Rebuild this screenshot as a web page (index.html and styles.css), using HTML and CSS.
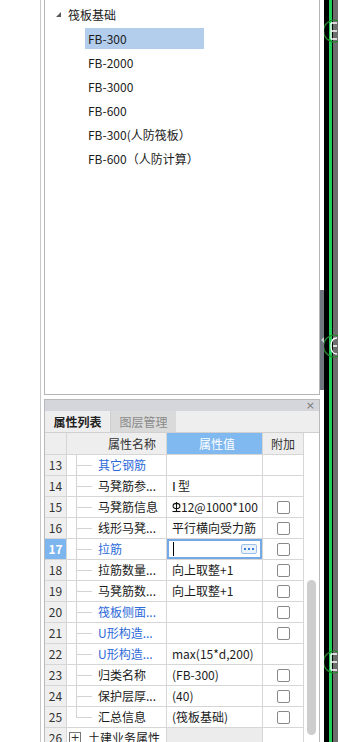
FILE: index.html
```html
<!DOCTYPE html>
<html>
<head>
<meta charset="utf-8">
<link rel="stylesheet" href="styles.css">
</head>
<body>
<div class="app">
  <div class="blank"></div>
  <div class="outer-line"></div>
  <div class="gap3"></div>
  <div class="main">
    <div class="tree">
      <div class="tree-row head"><span class="caret"></span><span class="label">筏板基础</span></div>
      <div class="tree-row item"><span class="label sel">FB-300</span></div>
      <div class="tree-row item"><span class="label">FB-2000</span></div>
      <div class="tree-row item"><span class="label">FB-3000</span></div>
      <div class="tree-row item"><span class="label">FB-600</span></div>
      <div class="tree-row item"><span class="label">FB-300(人防筏板）</span></div>
      <div class="tree-row item"><span class="label">FB-600（人防计算）</span></div>
    </div>
    <div class="props">
      <div class="titlebar"><span class="close">×</span></div>
      <div class="tabs">
        <div class="tab active">属性列表</div>
        <div class="tab">图层管理</div>
      </div>
      <div class="table-wrap">
        <div class="table">
          <div class="row header">
            <div class="c num"></div>
            <div class="c name">属性名称</div>
            <div class="c val">属性值</div>
            <div class="c add">附加</div>
          </div>
          <div class="row">
            <div class="c num">13</div>
            <div class="c name tl blue">其它钢筋</div>
            <div class="c val"></div>
            <div class="c add"></div>
          </div>
          <div class="row">
            <div class="c num">14</div>
            <div class="c name tl">马凳筋参...</div>
            <div class="c val"><span class="roman">Ⅰ</span>型</div>
            <div class="c add"></div>
          </div>
          <div class="row">
            <div class="c num">15</div>
            <div class="c name tl">马凳筋信息</div>
            <div class="c val"><svg class="rebar" width="9" height="12" viewBox="0 0 9 12"><ellipse cx="4.5" cy="5" rx="3.4" ry="2.6" fill="none" stroke="#111" stroke-width="1.1"/><line x1="4.5" y1="1" x2="4.5" y2="10.5" stroke="#111" stroke-width="1.1"/><line x1="0.5" y1="10.5" x2="8.5" y2="10.5" stroke="#111" stroke-width="1.1"/></svg>12@1000*100</div>
            <div class="c add"><span class="cb"></span></div>
          </div>
          <div class="row">
            <div class="c num">16</div>
            <div class="c name tl">线形马凳...</div>
            <div class="c val">平行横向受力筋</div>
            <div class="c add"><span class="cb"></span></div>
          </div>
          <div class="row">
            <div class="c num cur">17</div>
            <div class="c name tl blue">拉筋</div>
            <div class="c val edit"><span class="caretline"></span><span class="dots"><i></i><i></i><i></i></span></div>
            <div class="c add"><span class="cb"></span></div>
          </div>
          <div class="row">
            <div class="c num">18</div>
            <div class="c name tl">拉筋数量...</div>
            <div class="c val">向上取整+1</div>
            <div class="c add"><span class="cb"></span></div>
          </div>
          <div class="row">
            <div class="c num">19</div>
            <div class="c name tl">马凳筋数...</div>
            <div class="c val">向上取整+1</div>
            <div class="c add"><span class="cb"></span></div>
          </div>
          <div class="row">
            <div class="c num">20</div>
            <div class="c name tl blue">筏板侧面...</div>
            <div class="c val"></div>
            <div class="c add"><span class="cb"></span></div>
          </div>
          <div class="row">
            <div class="c num">21</div>
            <div class="c name tl blue">U形构造...</div>
            <div class="c val"></div>
            <div class="c add"><span class="cb"></span></div>
          </div>
          <div class="row">
            <div class="c num">22</div>
            <div class="c name tl blue">U形构造...</div>
            <div class="c val">max(15*d,200)</div>
            <div class="c add"></div>
          </div>
          <div class="row">
            <div class="c num">23</div>
            <div class="c name tl">归类名称</div>
            <div class="c val">(FB-300)</div>
            <div class="c add"><span class="cb"></span></div>
          </div>
          <div class="row">
            <div class="c num">24</div>
            <div class="c name tl">保护层厚...</div>
            <div class="c val">(40)</div>
            <div class="c add"><span class="cb"></span></div>
          </div>
          <div class="row">
            <div class="c num">25</div>
            <div class="c name tl last">汇总信息</div>
            <div class="c val">(筏板基础)</div>
            <div class="c add"><span class="cb"></span></div>
          </div>
          <div class="row">
            <div class="c num">26</div>
            <div class="c name group"><span class="plus">+</span>土建业务属性</div>
            <div class="c val grey"></div>
            <div class="c add"></div>
          </div>
        </div>
        <div class="vscroll"><div class="thumb"></div></div>
      </div>
    </div>
  </div>
  <div class="splitter"><div class="split-bar"><span class="split-arrow"></span></div></div>
  <div class="canvas">
    <div class="s black5"></div>
    <div class="s green"></div>
    <div class="s black1"></div>
    <div class="s grey5"></div>
    <svg class="markers" width="30" height="742" viewBox="0 0 30 742">
      <g fill="none" stroke="#23862a" stroke-width="1.2">
        <circle cx="11.5" cy="31" r="11"/>
        <circle cx="11.5" cy="346" r="11"/>
        <circle cx="11.5" cy="662" r="11"/>
      </g>
      <g fill="none" stroke="#ffffff" stroke-width="1.3">
        <path d="M8 23 V39 M8 23 H14 M8 31 H14 M8 39 H14"/>
        <path d="M14 338 Q8 338 8 346 Q8 354 14 354 M10 346 H14"/>
        <path d="M8 654 V670 M8 654 H14 M8 662 H14 M8 670 H14"/>
      </g>
    </svg>
  </div>
</div>
</body>
</html>
```
FILE: styles.css
```css
* { box-sizing: border-box; margin: 0; padding: 0; }
html, body { width: 338px; height: 742px; overflow: hidden; background: #fff; }
body {
  font-family: "Noto Sans CJK SC", "Noto Sans", sans-serif;
  font-size: 12px;
  color: #1b1b1b;
}
.app { display: flex; height: 742px; }
.blank { width: 40px; flex: none; }
.outer-line { width: 1px; flex: none; background: #c7c7c7; }
.gap3 { width: 3px; flex: none; }

.main { width: 276px; flex: none; display: flex; flex-direction: column; gap: 4px; }

/* tree */
.tree {
  height: 395px; flex: none;
  border: 1px solid #b5b5b5; border-top: none;
  padding-top: 2px;
}
.tree-row { height: 24px; display: flex; align-items: flex-start; }
.tree-row .label { margin-top: 2px; height: 21px; line-height: 21px; white-space: nowrap; }
.tree-row.head { padding-left: 11px; }
.caret {
  width: 0; height: 0; margin-top: 10px; margin-right: 7px;
  border-left: 5px solid transparent; border-bottom: 5px solid #5a5a5a;
}
.tree-row.item { padding-left: 40px; }
.tree-row.item .label { padding-left: 3px; }
.tree-row .sel { width: 119px; background: #b3cdec; }

/* properties panel */
.props {
  flex: 1; display: flex; flex-direction: column;
  border: 1px solid #b9b9b9; border-bottom: none;
  overflow: hidden;
}
.titlebar {
  height: 11px; flex: none; background: #d5d6db;
  display: flex; justify-content: flex-end; align-items: center;
  padding-right: 4px;
}
.close { font-size: 11px; line-height: 11px; color: #7a7a7a; font-family: "DejaVu Sans", sans-serif; }
.tabs {
  height: 22px; flex: none; display: flex;
  background: #eeeeee; border-bottom: 1px solid #d0d0d0;
}
.tab {
  width: 65px; text-align: center; line-height: 21px;
  font-size: 12px; color: #8a8a8a; background: #dadada;
}
.tab.active { background: #eeeeee; color: #222; font-weight: bold; }
.tab + .tab { width: 66px; border-left: 1px solid #cfcfcf; }

.table-wrap { flex: 1; display: flex; }
.table { width: 259px; flex: none; }
.row { display: flex; height: 21px; }
.row.header { height: 22px; }
.c {
  border-right: 1px solid #d6d6d6; border-bottom: 1px solid #d6d6d6;
  line-height: 20px; white-space: nowrap; overflow: hidden;
  position: relative;
}
.header .c { line-height: 21px; background: #eeeeee; color: #333; text-align: center; }
.header .c.val { background: #80b8f0; color: #fff; }
.num { width: 22px; flex: none; background: #efefef; text-align: center; color: #333; }
.num.cur { background: #7db5ef; color: #fff; font-weight: bold; }
.name { width: 100px; flex: none; padding-left: 31px; }
.val { width: 96px; flex: none; padding-left: 5px; }
.add { width: 41px; flex: none; display: flex; justify-content: center; align-items: center; }
.blue { color: #2d6ad9; }

.roman { font-family: "Liberation Serif", serif; font-size: 13px; margin-right: 2px; }

.tl::before {
  content: ""; position: absolute; left: 9px; top: 0; bottom: -1px;
  width: 1px; background: #d3d3d3;
}
.tl.last::before { bottom: 10px; }
.tl::after {
  content: ""; position: absolute; left: 9px; top: 10px;
  width: 16px; height: 1px; background: #d3d3d3;
}

.rebar { vertical-align: -1px; }

.cb {
  width: 13px; height: 13px; border: 1px solid #888; border-radius: 2px; background: #fff;
}

.val.edit {
  display: flex; align-items: center; justify-content: space-between;
  padding: 0 5px 0 6px;
  box-shadow: inset 0 0 0 2px #74a9e6;
}
.caretline { width: 1px; height: 14px; background: #000; }
.dots {
  width: 16px; height: 10px; border: 1px solid #9cc0ea; border-radius: 2px;
  background: #eaf2fb; display: flex; justify-content: center; align-items: center; gap: 2px;
}
.dots i { width: 2px; height: 2px; background: #3a7fd5; display: block; }

.group { padding-left: 2px; display: flex; align-items: center; }
.plus {
  width: 12px; height: 12px; border: 1px solid #777; background: #fff;
  font-family: "DejaVu Sans", sans-serif; font-size: 11px; line-height: 10px;
  text-align: center; margin-right: 7px; color: #333;
}
.val.grey { background: #ececec; }

.vscroll { width: 15px; flex: none; padding-top: 147px; padding-left: 3px; }
.thumb { width: 9px; height: 155px; border-radius: 5px; background: #cdcdcd; }

/* splitter */
.splitter { width: 4px; flex: none; padding-top: 290px; }
.split-bar {
  height: 100px; background: #6f7680;
  display: flex; align-items: center; justify-content: center;
}
.split-arrow {
  width: 0; height: 0;
  border-top: 3px solid transparent; border-bottom: 3px solid transparent;
  border-right: 3px solid #c6cad0;
}

/* canvas strip */
.canvas { width: 14px; flex: none; display: flex; position: relative; overflow: hidden; }
.s { height: 100%; flex: none; }
.black5 { width: 5px; background: #000; }
.green { width: 3px; background: #1fcf5a; }
.black1 { width: 1px; background: #000; }
.grey5 { width: 5px; background: #6e6e6e; }
.markers { position: absolute; left: -1px; top: 0; }
```
